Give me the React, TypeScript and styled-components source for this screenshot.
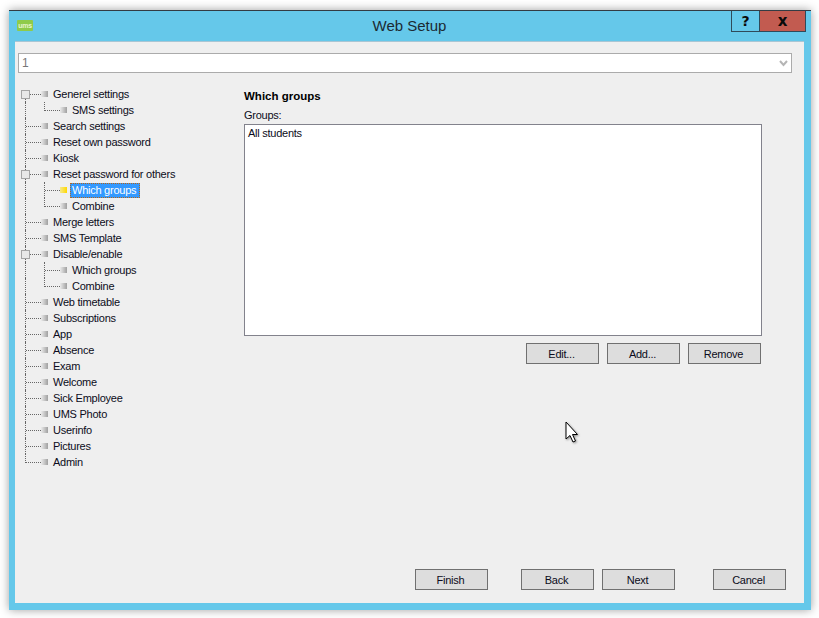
import React from "react";
import styled, { createGlobalStyle } from "styled-components";

const Global = createGlobalStyle`
  html, body { margin: 0; padding: 0; background: #fff; }
  body { width: 819px; height: 618px; overflow: hidden; font-family: "Liberation Sans", Arial, sans-serif; font-size: 11px; letter-spacing: -0.25px; color: #0c0c20; }
`;

const Page = styled.div`
  position: relative;
  width: 819px;
  height: 618px;
  padding: 10px 0 0 9px;
  box-sizing: border-box;
`;

const Window = styled.div`
  width: 802px;
  height: 600px;
  box-sizing: border-box;
  background: #65c8ea;
  border-top: 1px solid #333c44;
  box-shadow: 0 0 9px rgba(0, 0, 0, 0.38);
  display: flex;
  flex-direction: column;
`;

const TitleBar = styled.div`
  position: relative;
  height: 30px;
  flex: none;
  display: flex;
  align-items: center;
  justify-content: center;
`;

const Title = styled.div`
  font-size: 15px;
  letter-spacing: 0;
  color: #1c2a33;
  margin-top: -1px;
  margin-right: 1px;
`;

const Logo = styled.div`
  position: absolute;
  left: 8px;
  top: 9px;
  width: 16px;
  height: 11px;
  background: #8fcb4a;
  border-radius: 1px;
  color: #e8f5d0;
  font-size: 7px;
  font-weight: bold;
  line-height: 11px;
  text-align: center;
`;

const Controls = styled.div`
  position: absolute;
  right: 5px;
  top: 0;
  display: flex;
  height: 21px;
`;

const Control = styled.div<{ $close?: boolean; $w: number }>`
  width: ${(p) => p.$w}px;
  box-sizing: border-box;
  height: 21px;
  border: 1px solid #2f4a5a;
  border-top: none;
  margin-left: ${(p) => (p.$close ? "-1px" : "0")};
  background: ${(p) => (p.$close ? "#c25b50" : "#65c8ea")};
  display: flex;
  align-items: center;
  justify-content: center;
  font-family: "DejaVu Sans", sans-serif;
  font-weight: bold;
  font-size: ${(p) => (p.$close ? 15 : 14)}px;
  line-height: 1;
  color: #0a0a0a;
`;

const Client = styled.div`
  margin: 0 7px 7px 6px;
  flex: 1;
  background: #efefef;
  display: flex;
  flex-direction: column;
  box-shadow: inset 0 1px 0 #a9c6d4;
  min-height: 0;
`;

const Combo = styled.div`
  margin: 12px 12px 0 3px;
  height: 20px;
  flex: none;
  box-sizing: border-box;
  background: #fff;
  border: 1px solid #ababab;
  display: flex;
  align-items: center;
  justify-content: space-between;
  padding: 0 3px;
  color: #777;
  font-size: 12px;
`;

const Body = styled.div`
  flex: 1;
  display: flex;
  min-height: 0;
`;

const Tree = styled.ul`
  list-style: none;
  margin: 13px 0 0 6px;
  padding: 0;
  width: 223px;
  flex: none;
`;

const Row = styled.li`
  height: 16px;
  display: flex;
  align-items: center;
`;

const Guide = styled.span`
  position: relative;
  align-self: stretch;
  width: 19px;
  flex: none;
  &::before {
    content: "";
    position: absolute;
    left: 4px;
    top: 0;
    bottom: 0;
    border-left: 1px dotted #666;
  }
`;

const Connector = styled.span<{ $last?: boolean; $first?: boolean }>`
  position: relative;
  align-self: stretch;
  width: 20px;
  flex: none;
  &::before {
    content: "";
    position: absolute;
    left: 4px;
    top: ${(p) => (p.$first ? "8px" : "0")};
    bottom: ${(p) => (p.$last ? "7px" : "0")};
    border-left: 1px dotted #666;
  }
  &::after {
    content: "";
    position: absolute;
    left: 5px;
    width: 15px;
    top: 8px;
    border-top: 1px dotted #666;
  }
`;

const Expander = styled.span`
  position: absolute;
  z-index: 1;
  left: 0;
  top: 4px;
  width: 7px;
  height: 7px;
  background: #e8e8e8;
  border: 1px solid #a5a5a5;
`;

const NodeIcon = styled.span<{ $active?: boolean }>`
  width: 7px;
  height: 6px;
  flex: none;
  filter: blur(0.4px);
  background: ${(p) =>
    p.$active
      ? "linear-gradient(90deg,#f6e98a,#ffd800)"
      : "linear-gradient(90deg,#ececec,#a0a0a0)"};
`;

const Label = styled.span<{ $active?: boolean }>`
  margin-left: ${(p) => (p.$active ? "3px" : "5px")};
  padding: ${(p) => (p.$active ? "0 3px 0 1px" : "0")};
  height: ${(p) => (p.$active ? "15px" : "auto")};
  line-height: ${(p) => (p.$active ? "13px" : "normal")};
  box-sizing: border-box;
  white-space: nowrap;
  ${(p) =>
    p.$active
      ? "background:#3399ff;color:#fff;border:1px dotted #b5641a;"
      : ""}
`;

const Panel = styled.div`
  width: 518px;
  display: flex;
  flex-direction: column;
  padding-top: 16px;
`;

const Heading = styled.div`
  font-weight: bold;
  font-size: 11.5px;
  letter-spacing: 0;
  color: #000;
  height: 21px;
  line-height: 15px;
`;

const FieldLabel = styled.div`
  height: 10px;
  line-height: 10px;
`;

const ListBox = styled.div`
  margin-top: 4px;
  height: 212px;
  box-sizing: border-box;
  background: #fff;
  border: 1px solid #82828c;
  padding: 2px 3px;
`;

const ListButtons = styled.div`
  display: flex;
  justify-content: flex-end;
  gap: 8px;
  margin: 7px 1px 0 0;
`;

const Btn = styled.div`
  width: 73px;
  height: 21px;
  box-sizing: border-box;
  background: #dddddd;
  border: 1px solid #707070;
  padding-right: 2px;
  display: flex;
  align-items: center;
  justify-content: center;
`;

const Footer = styled.div`
  display: flex;
  flex: none;
  height: 34px;
  padding-left: 400px;
`;

const FooterGroup = styled.div<{ $ml: number }>`
  display: flex;
  gap: 8px;
  margin-left: ${(p) => p.$ml}px;
`;

const Cursor = styled.svg`
  position: absolute;
  left: 565px;
  top: 421px;
  filter: drop-shadow(1px 1px 1px rgba(0, 0, 0, 0.4));
`;

type N = { t: string; kind?: "child"; box?: boolean; active?: boolean; lastChild?: boolean };

const nodes: N[] = [
  { t: "Generel settings", box: true },
  { t: "SMS settings", kind: "child", lastChild: true },
  { t: "Search settings" },
  { t: "Reset own password" },
  { t: "Kiosk" },
  { t: "Reset password for others", box: true },
  { t: "Which groups", kind: "child", active: true },
  { t: "Combine", kind: "child", lastChild: true },
  { t: "Merge letters" },
  { t: "SMS Template" },
  { t: "Disable/enable", box: true },
  { t: "Which groups", kind: "child" },
  { t: "Combine", kind: "child", lastChild: true },
  { t: "Web timetable" },
  { t: "Subscriptions" },
  { t: "App" },
  { t: "Absence" },
  { t: "Exam" },
  { t: "Welcome" },
  { t: "Sick Employee" },
  { t: "UMS Photo" },
  { t: "Userinfo" },
  { t: "Pictures" },
  { t: "Admin" },
];

export default function App() {
  return (
    <Page>
      <Global />
      <Window>
        <TitleBar>
          <Logo>ums</Logo>
          <Title>Web Setup</Title>
          <Controls>
            <Control $w={29}>?</Control>
            <Control $w={47} $close>x</Control>
          </Controls>
        </TitleBar>
        <Client>
          <Combo>
            <span>1</span>
            <svg width="9" height="7" viewBox="0 0 9 7">
              <path d="M1 1 L4.5 5 L8 1" fill="none" stroke="#b5b5b5" strokeWidth="2" />
            </svg>
          </Combo>
          <Body>
            <Tree>
              {nodes.map((n, i) => (
                <Row key={i}>
                  {n.kind === "child" ? (
                    <>
                      <Guide />
                      <Connector $last={n.lastChild} />
                    </>
                  ) : (
                    <Connector $first={i === 0} $last={i === nodes.length - 1}>
                      {n.box && <Expander />}
                    </Connector>
                  )}
                  <NodeIcon $active={n.active} />
                  <Label $active={n.active}>{n.t}</Label>
                </Row>
              ))}
            </Tree>
            <Panel>
              <Heading>Which groups</Heading>
              <FieldLabel>Groups:</FieldLabel>
              <ListBox>All students</ListBox>
              <ListButtons>
                <Btn>Edit...</Btn>
                <Btn>Add...</Btn>
                <Btn>Remove</Btn>
              </ListButtons>
            </Panel>
          </Body>
          <Footer>
            <Btn>Finish</Btn>
            <FooterGroup $ml={33}>
              <Btn>Back</Btn>
              <Btn>Next</Btn>
            </FooterGroup>
            <FooterGroup $ml={38}>
              <Btn>Cancel</Btn>
            </FooterGroup>
          </Footer>
        </Client>
      </Window>
      <Cursor width="14" height="23" viewBox="0 0 14 23">
        <path d="M1 1 V18 L5 14.5 L8 21 L10.5 20 L7.5 13.5 L12.5 13.5 Z" fill="#fff" stroke="#000" strokeWidth="1" />
      </Cursor>
    </Page>
  );
}
